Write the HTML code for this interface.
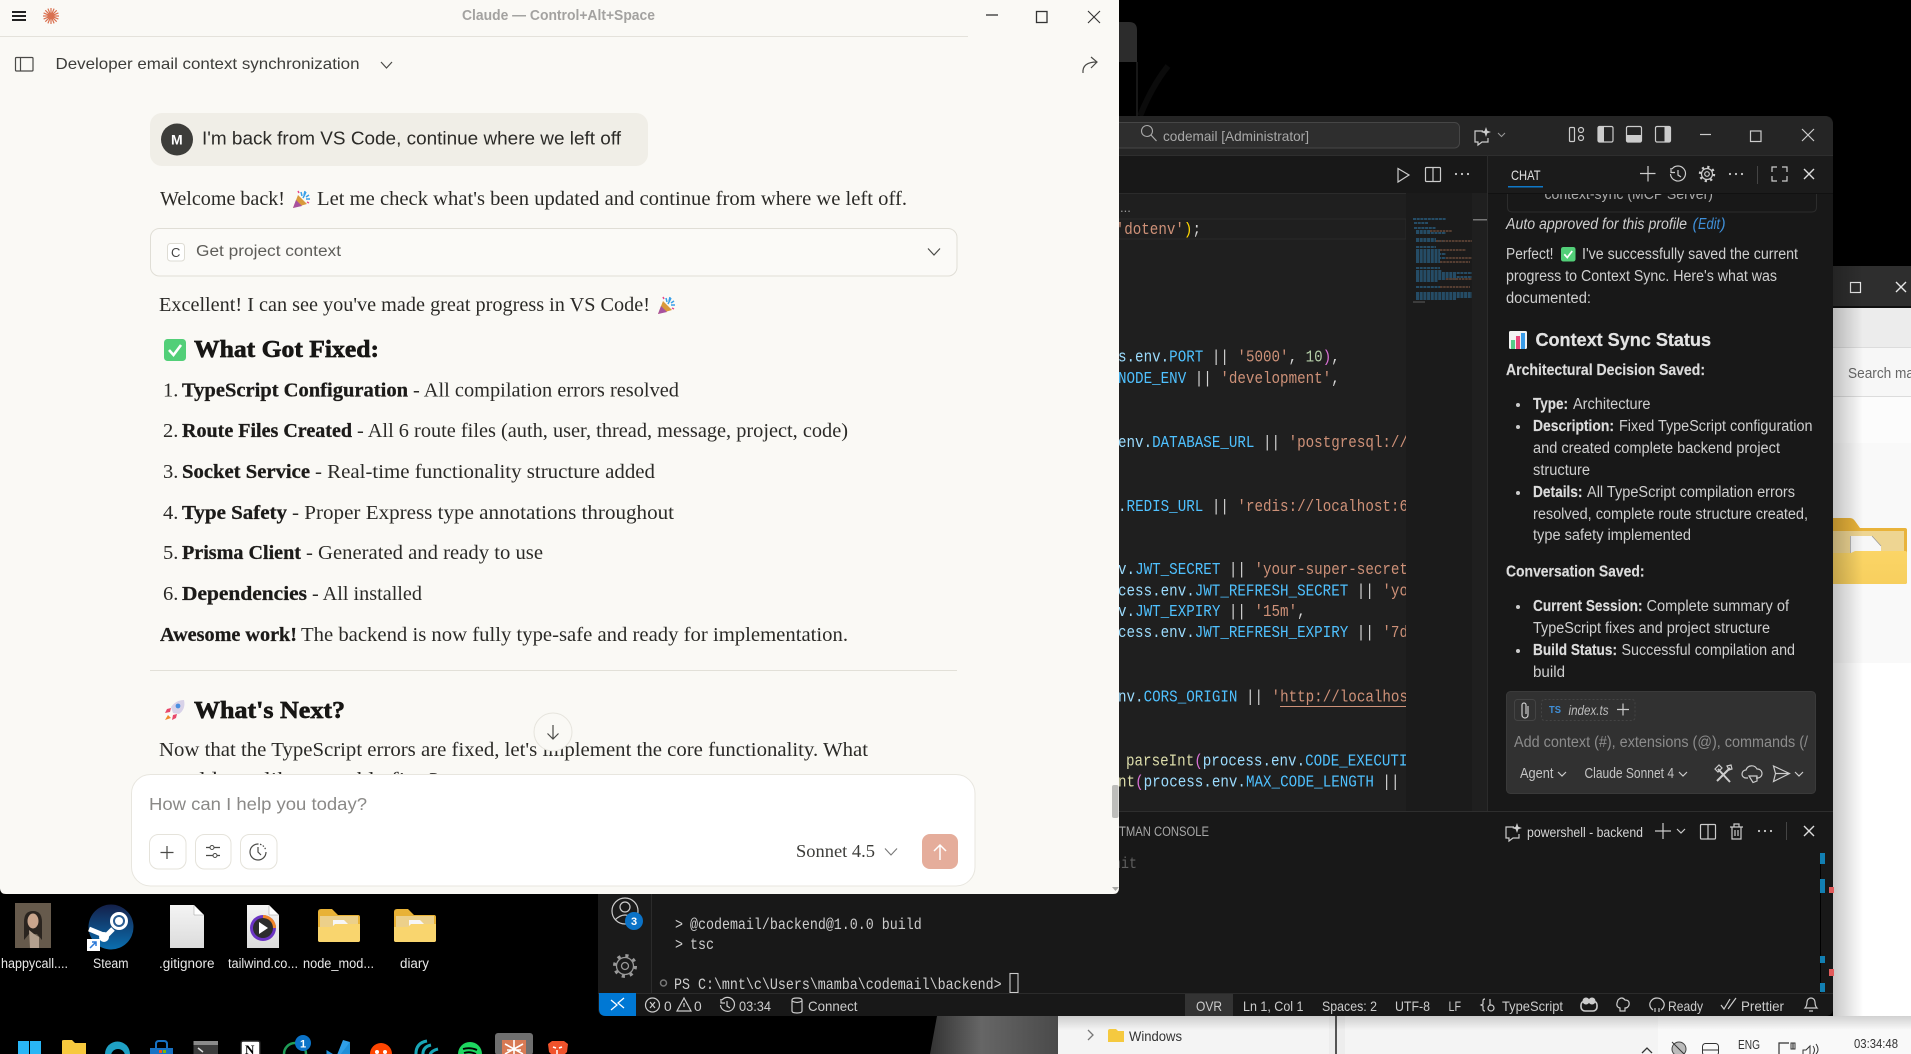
<!DOCTYPE html>
<html><head><meta charset="utf-8"><title>Claude</title>
<style>
html,body{margin:0;padding:0;background:#000;width:1911px;height:1054px;overflow:hidden}
svg{display:block;position:absolute;left:0;top:0}
text{white-space:pre;font-family:"Liberation Sans",sans-serif}
.se{font-family:"Liberation Serif",serif;font-size:20.5px;fill:#2b2a27}
.sb{font-family:"Liberation Serif",serif;font-size:20.5px;font-weight:bold;fill:#1c1b19;stroke:#1c1b19;stroke-width:.3}
.h{font-family:"Liberation Serif",serif;font-size:24.5px;font-weight:bold;fill:#171614;stroke:#171614;stroke-width:.65}
.ch{font-size:15.3px;fill:#cfcfcf}
.cb{font-size:15.3px;font-weight:bold;fill:#dcdcdc;stroke:#dcdcdc;stroke-width:.15}
.m{font-family:"Liberation Mono",monospace;font-size:16.5px;fill:#d4d4d4}
.tm{font-family:"Liberation Mono",monospace;font-size:15.5px;fill:#cccccc}
.st{font-size:13.8px;fill:#cccccc}
.dk{font-size:13.5px;fill:#e8e8e8;text-anchor:start}
.v{fill:#9cdcfe}.c{fill:#4fc1ff}.s{fill:#ce9178}.n{fill:#b5cea8}.f{fill:#dcdcaa}.p{fill:#da70d6}.y{fill:#ffd700}
.i{fill:none;stroke:#cccccc;stroke-width:1.2}
.l{fill:none;stroke:#4a4a47;stroke-width:1.2}
</style></head>
<body>
<svg width="1911" height="1054" viewBox="0 0 1911 1054" xmlns="http://www.w3.org/2000/svg">
<defs>
<linearGradient id="shR" x1="0" x2="1" y1="0" y2="0"><stop offset="0" stop-color="#000" stop-opacity=".22"/><stop offset="1" stop-color="#000" stop-opacity="0"/></linearGradient>
<linearGradient id="shB" x1="0" x2="0" y1="0" y2="1"><stop offset="0" stop-color="#000" stop-opacity=".16"/><stop offset="1" stop-color="#000" stop-opacity="0"/></linearGradient>
<linearGradient id="steam" x1="0" x2="0" y1="0" y2="1"><stop offset="0" stop-color="#14204a"/><stop offset="1" stop-color="#0b6fb0"/></linearGradient>
<linearGradient id="page" x1="0" x2="0" y1="0" y2="1"><stop offset="0" stop-color="#f4f4f4"/><stop offset="1" stop-color="#dcdcdc"/></linearGradient>
<linearGradient id="wall" x1="0" x2="1" y1="0" y2="0"><stop offset="0" stop-color="#333"/><stop offset=".4" stop-color="#666"/><stop offset="1" stop-color="#4a4a4a"/></linearGradient>
<linearGradient id="fold" x1="0" x2="0" y1="0" y2="1"><stop offset="0" stop-color="#fbd566"/><stop offset="1" stop-color="#f7cf5e"/></linearGradient>
<clipPath id="code"><rect x="1119" y="193" width="287" height="620"/></clipPath>
<clipPath id="chat"><rect x="1488" y="194" width="345" height="40"/></clipPath>
<g id="folder">
<path d="M0 3q0-3 3-3h11l6 6h20q2 0 2 2v23q0 2-2 2H2q-2 0-2-2z" fill="#e8b236"/>
<rect x="2" y="7" width="38" height="14" fill="#ecd08a"/>
<path d="M15 11h11l5 5v8H15z" fill="#f6f6f6"/>
<path d="M0 18h14l3-3h25v16q0 2-2 2H2q-2 0-2-2z" fill="#f9d56e"/>
</g>
<g id="copi">
<path d="M9 3H1v11h3v3l4-3h6v-4" fill="none" stroke="#cccccc" stroke-width="1.2"/>
<path d="M12-1l1.3 3.7L17 4l-3.700 1.300L12 9l-1.300-3.700L7 4l3.700-1.300z" fill="#cccccc"/>
</g>
<g id="check">
<rect width="22" height="22" rx="3.500" fill="#52cf78"/>
<path d="M5 11l4.500 5L17 6" fill="none" stroke="#fff" stroke-width="2.600"/>
</g>
<g id="party">
<path d="M1 18L6 5l9 9z" fill="#d99a3c"/>
<path d="M1 18L4 10l6 6z" fill="#a8519e"/>
<path d="M9 2l1 4M13 1l-1 4M17 5l-3 2M18 9l-4 0M11 8l3-6" stroke="#3aa0e8" stroke-width="1.500" fill="none"/>
<path d="M6 1l1 2M15 12l2 1" stroke="#e8488a" stroke-width="1.500" fill="none"/>
</g>
</defs>

<!-- desktop -->
<rect width="1911" height="1054" fill="#000"/>
<path d="M1119 22h10q8 0 8 8v32h-18z" fill="#2c2c2c"/>
<path d="M1137 62v54" stroke="#2e2e2e" stroke-width="1"/>
<path d="M1140 116q12-30 28-50" stroke="#0b0b0b" stroke-width="6" fill="none"/>

<!-- explorer behind -->
<rect x="1833" y="266" width="78" height="788" fill="#fcfcfc"/>
<rect x="1833" y="266" width="78" height="41" fill="#2e2e2e"/>
<rect x="1833" y="306" width="78" height="2" fill="#111"/>
<rect x="1833" y="308" width="78" height="39" fill="#ececec"/>
<rect x="1833" y="347" width="78" height="49" fill="#f7f7f7"/>
<path d="M1833 347.500h78M1833 396.500h78M1833 443.500h78" stroke="#dcdcdc"/>
<rect x="1850.500" y="282.500" width="10" height="10" fill="none" stroke="#e8e8e8" stroke-width="1.200"/>
<path d="M1896 282l10 10M1906 282l-10 10" stroke="#e8e8e8" stroke-width="1.400"/>
<text x="1848" y="378" font-size="15" fill="#666" textLength="66" lengthAdjust="spacingAndGlyphs">Search ma</text>
<rect x="1833" y="443" width="78" height="220" fill="#f9f9f9"/>
<rect x="1833" y="663" width="78" height="391" fill="#fff"/>
<path d="M1820 518h30q3 0 5 3l5 7h45q2 0 2 2v52q0 2-2 2h-85z" fill="#e9b33a"/>
<rect x="1833" y="531" width="71" height="24" fill="#eed592"/>
<path d="M1850 536h22l9 10v9h-31z" fill="#f7f7f7"/><path d="M1850.500 536v19M1872 536l9 10" stroke="#999" stroke-width=".7" fill="none"/>
<path d="M1833 553h18l4-2h50q2 0 2 2v29q0 2-2 2h-72z" fill="url(#fold)"/>
<rect x="1833" y="266" width="30" height="788" fill="url(#shR)"/>

<!-- bottom explorer strip -->
<path d="M930 1054L937 1016H1058V1054z" fill="url(#wall)"/>
<rect x="1058" y="1016" width="853" height="38" fill="#f4f4f4"/>
<rect x="1658" y="1016" width="253" height="38" fill="#f9f9f9"/>
<rect x="1329" y="1016" width="16" height="38" fill="#ededed"/>
<rect x="1335" y="1016" width="2" height="38" fill="#555"/>
<rect x="1058" y="1016" width="853" height="14" fill="url(#shB)"/>
<path d="M1088 1030l5 5-5 5" fill="none" stroke="#777" stroke-width="1.300"/>
<path d="M1108 1031q0-2 2-2h6l2 2h6v11h-16z" fill="#f5c93f"/>
<text x="1129" y="1041" font-size="14" fill="#333" textLength="53" lengthAdjust="spacingAndGlyphs">Windows</text>
<path d="M1642 1053l5-5 5 5" fill="none" stroke="#333" stroke-width="1.300"/>
<circle cx="1679" cy="1049" r="7" fill="#bbb" stroke="#444"/><path d="M1672 1042l14 14" stroke="#333"/>
<rect x="1702.500" y="1043.500" width="16" height="12" rx="3" fill="none" stroke="#333"/><path d="M1702 1050h17" stroke="#333"/>
<text x="1738" y="1049" font-size="13" fill="#333" textLength="22" lengthAdjust="spacingAndGlyphs">ENG</text>
<path d="M1779 1054v-11h10M1793 1043v6" fill="none" stroke="#333" stroke-width="1.200"/><rect x="1791" y="1043" width="4" height="6" fill="none" stroke="#333"/>
<path d="M1803 1054v-4h3l4-4v8M1813 1046q3 4 0 8M1816 1044q4 6 0 10" fill="none" stroke="#333"/>
<text x="1854" y="1048" font-size="13" fill="#333" textLength="44" lengthAdjust="spacingAndGlyphs">03:34:48</text>

<!-- VS Code window -->
<path d="M598 124q0-8 8-8h1219q8 0 8 8v884q0 8-8 8H606q-8 0-8-8z" fill="#181818"/>
<rect x="598" y="116" width="1235" height="39" rx="8" fill="#252525"/>
<rect x="598" y="130" width="1235" height="25" fill="#252525"/>
<path d="M598 155.500h1235" stroke="#2e2e2e"/>
<rect x="1000" y="122.500" width="459.500" height="25.500" rx="5" fill="#2e2e2e" stroke="#464646"/>
<circle cx="1147" cy="131" r="5.500" fill="none" stroke="#aaa" stroke-width="1.100"/><path d="M1151 135l5.500 6" stroke="#aaa" stroke-width="1.200"/>
<text x="1163" y="141" font-size="14" fill="#a8a8a8" textLength="146" lengthAdjust="spacingAndGlyphs">codemail [Administrator]</text>
<use href="#copi" x="1474" y="128"/>
<path d="M1498 133l3.500 3.500 3.500-3.500" fill="none" stroke="#999"/>
<rect x="1569.500" y="127.500" width="5" height="14" rx="1" class="i"/><circle cx="1581" cy="130" r="2.500" class="i"/><circle cx="1581" cy="138" r="2.500" class="i"/>
<rect x="1598" y="126.500" width="15" height="15.500" rx="1.500" class="i"/><rect x="1598" y="126.500" width="6" height="15.500" fill="#cccccc"/>
<rect x="1626.500" y="126.500" width="15" height="15.500" rx="1.500" class="i"/><rect x="1626.500" y="135" width="15" height="7" fill="#cccccc"/>
<rect x="1655.500" y="126.500" width="15" height="15.500" rx="1.500" class="i"/><rect x="1664.500" y="126.500" width="6" height="15.500" fill="#cccccc"/>
<path d="M1700 134.500h11" class="i"/><rect x="1750.500" y="131" width="10.500" height="10.500" class="i"/><path d="M1802 129l12 12M1814 129l-12 12" class="i" stroke="#aaa"/>

<!-- editor -->
<rect x="1119" y="193" width="368" height="619" fill="#1f1f1f"/>
<path d="M1119 193.500h368" stroke="#2b2b2b"/>
<path d="M1398 168.500l11 6.500-11 7z" class="i"/>
<rect x="1425.500" y="167.500" width="15" height="14" rx="1" class="i"/><path d="M1433 167.500v14" class="i"/>
<circle cx="1456" cy="174" r="1.100" fill="#ccc"/><circle cx="1462" cy="174" r="1.100" fill="#ccc"/><circle cx="1468" cy="174" r="1.100" fill="#ccc"/>
<text x="1120" y="212" font-size="13" fill="#9a9a9a">...</text>
<rect x="1119" y="219" width="287" height="20" fill="none" stroke="#2a2a2a"/>
<g clip-path="url(#code)">
<text class="m" transform="translate(1115.700,234) scale(.862,1)"><tspan class="s">'dotenv'</tspan><tspan class="y">)</tspan>;</text>
<text class="m" transform="translate(1118,361.700) scale(.862,1)"><tspan class="v">s.env.</tspan><tspan class="c">PORT</tspan> || <tspan class="s">'5000'</tspan>, <tspan class="n">10</tspan><tspan class="p">)</tspan>,</text>
<text class="m" transform="translate(1118,383) scale(.862,1)"><tspan class="c">NODE_ENV</tspan> || <tspan class="s">'development'</tspan>,</text>
<text class="m" transform="translate(1118,447) scale(.862,1)"><tspan class="v">env.</tspan><tspan class="c">DATABASE_URL</tspan> || <tspan class="s">'postgresql://localhost'</tspan></text>
<text class="m" transform="translate(1118,511) scale(.862,1)"><tspan class="v">.</tspan><tspan class="c">REDIS_URL</tspan> || <tspan class="s">'redis://localhost:6379'</tspan></text>
<text class="m" transform="translate(1118,574) scale(.862,1)"><tspan class="v">v.</tspan><tspan class="c">JWT_SECRET</tspan> || <tspan class="s">'your-super-secret-key'</tspan></text>
<text class="m" transform="translate(1118,595.700) scale(.862,1)"><tspan class="v">cess.env.</tspan><tspan class="c">JWT_REFRESH_SECRET</tspan> || <tspan class="s">'your-refresh'</tspan></text>
<text class="m" transform="translate(1118,616) scale(.862,1)"><tspan class="v">v.</tspan><tspan class="c">JWT_EXPIRY</tspan> || <tspan class="s">'15m'</tspan>,</text>
<text class="m" transform="translate(1118,637) scale(.862,1)"><tspan class="v">cess.env.</tspan><tspan class="c">JWT_REFRESH_EXPIRY</tspan> || <tspan class="s">'7d'</tspan>,</text>
<text class="m" transform="translate(1118,701.700) scale(.862,1)"><tspan class="v">nv.</tspan><tspan class="c">CORS_ORIGIN</tspan> || <tspan class="s">'http://localhost:3000'</tspan></text>
<path d="M1280 706.500h130" stroke="#ce9178"/>
<text class="m" transform="translate(1126,765.700) scale(.862,1)"><tspan class="f">parseInt</tspan><tspan class="p">(</tspan><tspan class="v">process.env.</tspan><tspan class="c">CODE_EXECUTION</tspan></text>
<text class="m" transform="translate(1118,786.700) scale(.862,1)"><tspan class="f">nt</tspan><tspan class="p">(</tspan><tspan class="v">process.env.</tspan><tspan class="c">MAX_CODE_LENGTH</tspan> ||</text>
</g>
<!-- minimap -->
<rect x="1406" y="193" width="66" height="619" fill="#1b1b1b"/>
<rect x="1472" y="193" width="15" height="619" fill="#1f1f1f"/>
<rect x="1473" y="219" width="14" height="1.500" fill="#777"/>
<path d="M1487.500 155v657" stroke="#2b2b2b"/>
<path d="M1413 219h33M1414 223h14M1414 228h22M1416 231h14M1416 233h30M1416 239h20M1416 241h30M1416 247h20M1416 250h24M1416 252h24M1416 254h30M1416 256h24M1416 258h30M1416 260h24M1416 262h26M1416 268h24M1416 271h26M1416 273h56M1416 275h40M1416 277h56M1416 279h40M1416 281h22M1416 287h26M1416 293h56M1416 295h56M1416 297h56M1416 299h40" stroke="#2f7eb0" stroke-width=".9" fill="none" stroke-dasharray="3 .7"/>
<path d="M1430 231h22M1436 241h36M1440 250h26M1446 258h26M1440 262h30M1446 279h26M1440 287h30" stroke="#8f6148" stroke-width=".9" fill="none" stroke-dasharray="2.500 .7"/>
<path d="M1413 302h12" stroke="#666" stroke-width=".9"/>

<!-- chat panel -->
<rect x="1488" y="156" width="345" height="656" fill="#181818"/>
<g clip-path="url(#chat)">
<text x="1544.500" y="199" font-size="14.500" fill="#aaa" textLength="168.500" lengthAdjust="spacingAndGlyphs">context-sync (MCP Server)</text>
</g>
<path d="M1507.500 193v14q0 5 5 5h299q5 0 5-5v-14" fill="none" stroke="#2c2c2c"/>
<rect x="1488" y="156" width="345" height="37" fill="#1b1b1b"/>
<path d="M1488 193.500h345" stroke="#111"/>
<text x="1511" y="180" font-size="14" fill="#e0e0e0" textLength="29.500" lengthAdjust="spacingAndGlyphs">CHAT</text>
<rect x="1508" y="186" width="35" height="1.500" fill="#0f78c8"/>
<path d="M1640 173.500h15.500M1648 166v15.500" class="i" stroke-width="1.400"/>
<path d="M1672 169a7.500 7.500 0 1 1-1.500 5M1671 168v4.500h4M1678 170v5l3 2" class="i"/>
<circle cx="1707" cy="174" r="2.300" class="i"/><circle cx="1707" cy="174" r="5.500" class="i"/><circle cx="1707" cy="174" r="7" fill="none" stroke="#ccc" stroke-width="2.400" stroke-dasharray="2.200 3.300"/>
<circle cx="1730" cy="174" r="1.100" fill="#ccc"/><circle cx="1736" cy="174" r="1.100" fill="#ccc"/><circle cx="1742" cy="174" r="1.100" fill="#ccc"/>
<path d="M1757.500 166v18" stroke="#444"/>
<path d="M1772 172v-5h5M1782 167h5v5M1787 176v5h-5M1777 181h-5v-5" class="i" stroke-width="1.400"/>
<path d="M1804 169l10 10M1814 169l-10 10" stroke="#ddd" stroke-width="1.400"/>

<text x="1506" y="229" class="ch" font-style="italic" textLength="181" lengthAdjust="spacingAndGlyphs">Auto approved for this profile</text>
<text x="1692.500" y="229" class="ch" font-style="italic" style="fill:#3f8fd8">(</text>
<text x="1698" y="229" class="ch" font-style="italic" style="fill:#3f8fd8" textLength="22" lengthAdjust="spacingAndGlyphs">Edit</text>
<text x="1720.500" y="229" class="ch" font-style="italic" style="fill:#3f8fd8">)</text>
<text x="1506" y="259" class="ch" textLength="47.500" lengthAdjust="spacingAndGlyphs">Perfect!</text>
<g transform="translate(1561,247) scale(.66)"><use href="#check"/></g>
<text x="1582" y="259" class="ch" textLength="216" lengthAdjust="spacingAndGlyphs">I've successfully saved the current</text>
<text x="1506" y="281" class="ch" textLength="271" lengthAdjust="spacingAndGlyphs">progress to Context Sync. Here's what was</text>
<text x="1506" y="303" class="ch" textLength="85" lengthAdjust="spacingAndGlyphs">documented:</text>
<rect x="1509" y="331" width="18" height="18" rx="1.500" fill="#f2f2f2"/><rect x="1511" y="340" width="4" height="9" fill="#55cc88"/><rect x="1516" y="336" width="4" height="13" fill="#e8487a"/><rect x="1521" y="333" width="4" height="16" fill="#3a9ce8"/>
<text x="1535.500" y="346" font-size="18" font-weight="bold" fill="#e2e2e2" stroke="#e2e2e2" stroke-width=".25" textLength="175.500" lengthAdjust="spacingAndGlyphs">Context Sync Status</text>
<text x="1506" y="375" class="cb" textLength="199" lengthAdjust="spacingAndGlyphs">Architectural Decision Saved:</text>
<g fill="#ccc"><circle cx="1518" cy="405" r="2"/><circle cx="1518" cy="427" r="2"/><circle cx="1518" cy="493" r="2"/><circle cx="1518" cy="607" r="2"/><circle cx="1518" cy="651" r="2"/></g>
<text x="1533" y="409" class="cb" textLength="35" lengthAdjust="spacingAndGlyphs">Type:</text>
<text x="1573" y="409" class="ch" textLength="77.500" lengthAdjust="spacingAndGlyphs">Architecture</text>
<text x="1533" y="431" class="cb" textLength="81" lengthAdjust="spacingAndGlyphs">Description:</text>
<text x="1619" y="431" class="ch" textLength="193.500" lengthAdjust="spacingAndGlyphs">Fixed TypeScript configuration</text>
<text x="1533" y="453" class="ch" textLength="247" lengthAdjust="spacingAndGlyphs">and created complete backend project</text>
<text x="1533" y="475" class="ch" textLength="57" lengthAdjust="spacingAndGlyphs">structure</text>
<text x="1533" y="497" class="cb" textLength="49.500" lengthAdjust="spacingAndGlyphs">Details:</text>
<text x="1587" y="497" class="ch" textLength="208" lengthAdjust="spacingAndGlyphs">All TypeScript compilation errors</text>
<text x="1533" y="519" class="ch" textLength="275" lengthAdjust="spacingAndGlyphs">resolved, complete route structure created,</text>
<text x="1533" y="540" class="ch" textLength="158" lengthAdjust="spacingAndGlyphs">type safety implemented</text>
<text x="1506" y="576.500" class="cb" textLength="138.500" lengthAdjust="spacingAndGlyphs">Conversation Saved:</text>
<text x="1533" y="611" class="cb" textLength="109.500" lengthAdjust="spacingAndGlyphs">Current Session:</text>
<text x="1646.500" y="611" class="ch" textLength="142.500" lengthAdjust="spacingAndGlyphs">Complete summary of</text>
<text x="1533" y="633" class="ch" textLength="237" lengthAdjust="spacingAndGlyphs">TypeScript fixes and project structure</text>
<text x="1533" y="655" class="cb" textLength="84" lengthAdjust="spacingAndGlyphs">Build Status:</text>
<text x="1621.500" y="655" class="ch" textLength="173.500" lengthAdjust="spacingAndGlyphs">Successful compilation and</text>
<text x="1533" y="677" class="ch" textLength="32" lengthAdjust="spacingAndGlyphs">build</text>

<!-- chat input -->
<rect x="1506.500" y="691.500" width="309" height="102" rx="4" fill="#313131" stroke="#3a3a3a"/>
<rect x="1514.500" y="699.500" width="21" height="21" rx="3" fill="none" stroke="#444"/>
<path d="M1528 706v9a3 3 0 0 1-6 0v-10a2 2 0 0 1 4 0v9" class="i"/>
<rect x="1541.500" y="699.500" width="93.500" height="21" rx="3" fill="none" stroke="#444" stroke-dasharray="2 2"/>
<text x="1549" y="713" font-size="10" font-weight="bold" fill="#3f8fd8" textLength="12" lengthAdjust="spacingAndGlyphs">TS</text>
<text x="1568.500" y="715" font-size="14" font-style="italic" fill="#bbb" textLength="40" lengthAdjust="spacingAndGlyphs">index.ts</text>
<path d="M1617 709.500h12M1623 703.500v12" class="i"/>
<text x="1514" y="747" font-size="15.300" fill="#8c8c8c" textLength="294" lengthAdjust="spacingAndGlyphs">Add context (#), extensions (@), commands (/</text>
<text x="1520" y="778" font-size="14.500" fill="#c4c4c4" textLength="33.500" lengthAdjust="spacingAndGlyphs">Agent</text>
<path d="M1558 772l4 4 4-4M1679 772l4 4 4-4M1795 772l4 4 4-4" class="i" stroke-width="1"/>
<text x="1584.500" y="778" font-size="14.500" fill="#c4c4c4" textLength="89.500" lengthAdjust="spacingAndGlyphs">Claude Sonnet 4</text>
<path d="M1718 769l12 13M1730 768l-13 13" stroke="#ccc" stroke-width="2" fill="none"/><path d="M1715 769l4-4 3 3-4 4zM1727 766l4-1 1 4-3 1z" class="i"/>
<path d="M1748 778h-2a4 4 0 0 1 0-8 6 6 0 0 1 11-1 4 4 0 0 1 1 9h-2M1749 776h8v5l-4 1.500z" class="i"/>
<path d="M1773.500 766l16 7.500-16 8 2-8zM1775.500 773.500h14" class="i"/>

<!-- bottom panel -->
<rect x="651" y="812" width="1182" height="181" fill="#181818"/>
<path d="M1119 811.500h714" stroke="#2e2e2e"/>
<text x="1119" y="836" font-size="13.500" fill="#a8a8a8" textLength="90" lengthAdjust="spacingAndGlyphs">TMAN CONSOLE</text>
<text class="tm" transform="translate(1113,868) scale(.86,1)" style="fill:#5f5f5f">nit</text>
<use href="#copi" x="1505" y="824"/>
<text x="1527" y="837" font-size="14" fill="#d4d4d4" textLength="116" lengthAdjust="spacingAndGlyphs">powershell - backend</text>
<path d="M1655 831h16M1663 823v16" class="i"/>
<path d="M1677 829l4 4 4-4" class="i" stroke-width="1"/>
<rect x="1700.500" y="824.500" width="15" height="14.500" rx="1" class="i"/><path d="M1708 824.500v14.500" class="i"/>
<path d="M1730 827h13M1734 827v-3h5v3M1732 827v12h9v-12M1735 830v6M1738 830v6" class="i"/>
<circle cx="1759" cy="831" r="1.100" fill="#ccc"/><circle cx="1765" cy="831" r="1.100" fill="#ccc"/><circle cx="1771" cy="831" r="1.100" fill="#ccc"/>
<path d="M1786.500 822v18" stroke="#444"/>
<path d="M1804 826l10 10M1814 826l-10 10" stroke="#ddd" stroke-width="1.400"/>
<path d="M1820.500 853v140" stroke="#000"/>
<g fill="#127fb2"><rect x="1820" y="853" width="5" height="11"/><rect x="1820" y="879" width="5" height="14"/><rect x="1820" y="956" width="5" height="7"/><rect x="1820" y="983" width="5" height="9"/></g>
<g fill="#e25c5c"><rect x="1829" y="887" width="5" height="6"/><rect x="1829" y="969" width="5" height="7"/></g>

<!-- activity bar -->
<rect x="598" y="894" width="53" height="99" fill="#1a1a1a"/>
<path d="M651.500 894v99" stroke="#2b2b2b"/>
<circle cx="625" cy="911" r="13" class="i" stroke="#999"/>
<circle cx="625" cy="907" r="5" class="i" stroke="#999"/>
<path d="M615 920q10-10 20 0" class="i" stroke="#999"/>
<circle cx="634" cy="921" r="9" fill="#0b73c8"/>
<text x="631" y="925" font-size="11" font-weight="bold" fill="#fff">3</text>
<circle cx="625" cy="966" r="3.500" fill="none" stroke="#999" stroke-width="1.300"/><circle cx="625" cy="966" r="8.500" fill="none" stroke="#999" stroke-width="1.300"/><circle cx="625" cy="966" r="10.500" fill="none" stroke="#999" stroke-width="3" stroke-dasharray="3.200 5.050"/>

<!-- terminal -->
<text class="tm" transform="translate(675,929) scale(.86,1)">&gt;</text>
<text class="tm" transform="translate(690,929) scale(.86,1)">@codemail/backend@1.0.0 build</text>
<text class="tm" transform="translate(675,949) scale(.86,1)">&gt;</text>
<text class="tm" transform="translate(690,949) scale(.86,1)">tsc</text>
<circle cx="663.500" cy="983" r="3" fill="none" stroke="#777" stroke-width="1.500"/>
<text class="tm" transform="translate(674,989) scale(.86,1)">PS C:\mnt\c\Users\mamba\codemail\backend&gt;</text>
<rect x="1010" y="973.500" width="8" height="19" fill="none" stroke="#ccc" stroke-width="1.100"/>

<!-- status bar -->
<path d="M598 993h1235v15q0 8-8 8H606q-8 0-8-8z" fill="#181818"/>
<path d="M598 993.500h1235" stroke="#2b2b2b"/>
<path d="M599 993h37v23h-30q-7 0-7-7z" fill="#0078d4"/>
<path d="M611 1000l6 5-6 5M624 998l-6 5 6 5" fill="none" stroke="#fff" stroke-width="1.300"/>
<circle cx="652.500" cy="1005" r="7" class="i"/><path d="M650 1002l5 6M655 1002l-5 6" class="i"/>
<text x="664" y="1011" class="st">0</text>
<path d="M684 998l7 13h-14zM684 1003v4" class="i"/>
<text x="694" y="1011" class="st">0</text>
<path d="M722 1000a7 7 0 1 1-1.500 5M721 999v4h4M727 1001v5l3 2" class="i"/>
<text x="739" y="1011" class="st" textLength="32" lengthAdjust="spacingAndGlyphs">03:34</text>
<path d="M792 1000q0-2 5-2t5 2v11q0 2-5 2t-5-2zM792 1001q5 3 10 0" class="i"/>
<text x="808" y="1011" class="st" textLength="49.500" lengthAdjust="spacingAndGlyphs">Connect</text>
<rect x="1185" y="994" width="48" height="22" fill="#333"/>
<text x="1196" y="1011" class="st" textLength="26" lengthAdjust="spacingAndGlyphs">OVR</text>
<text x="1243" y="1011" class="st" textLength="60.500" lengthAdjust="spacingAndGlyphs">Ln 1, Col 1</text>
<text x="1322" y="1011" class="st" textLength="55" lengthAdjust="spacingAndGlyphs">Spaces: 2</text>
<text x="1395" y="1011" class="st" textLength="35" lengthAdjust="spacingAndGlyphs">UTF-8</text>
<text x="1448.500" y="1011" class="st" textLength="12.500" lengthAdjust="spacingAndGlyphs">LF</text>
<path d="M1485 999q-2 0-2 2v3l-2 1 2 1v3q0 2 2 2" class="i"/><circle cx="1491" cy="1008" r="3" class="i"/><path d="M1490 999v6" class="i"/>
<text x="1502" y="1011" class="st" textLength="61" lengthAdjust="spacingAndGlyphs">TypeScript</text>
<rect x="1581" y="1001" width="16" height="10" rx="4" fill="none" stroke="#ccc" stroke-width="1.600"/><circle cx="1586" cy="1001" r="3.500" fill="#ccc"/><circle cx="1592" cy="1001" r="3.500" fill="#ccc"/>
<path d="M1618 1000q4-4 7 0 5 0 4 5-1 3-4 3v3h-5v-3q-4-1-3-5z" class="i"/>
<path d="M1653 1010q-4-3-3-7 2-5 7-5t7 5q1 4-3 7M1655 1012v-4M1659 1012v-4" class="i"/>
<text x="1668" y="1011" class="st" textLength="35" lengthAdjust="spacingAndGlyphs">Ready</text>
<path d="M1721 1005l3 4 6-10M1728 1009l8-11" class="i"/>
<text x="1741" y="1011" class="st" textLength="43" lengthAdjust="spacingAndGlyphs">Prettier</text>
<path d="M1805 1008q2-2 2-6a4 4 0 0 1 8 0q0 4 2 6zM1809 1011h4" class="i"/>

<!-- desktop icons -->
<rect x="15" y="903" width="36" height="45" fill="#665a4c"/>
<path d="M24 940v-18q0-11 9-11t9 11v18l-5-6h-8z" fill="#2a241f"/>
<ellipse cx="33" cy="921" rx="5.500" ry="7.500" fill="#c9a58c"/>
<path d="M30 948l-1-18 5 4 5 3v11z" fill="#b3a08e"/>
<circle cx="111" cy="927" r="22.500" fill="url(#steam)"/>
<circle cx="119" cy="921" r="9" fill="#fff"/><circle cx="119" cy="921" r="6" fill="#2a5d92"/><circle cx="119" cy="921" r="4" fill="#fff"/>
<path d="M89 929l17 7 7-7" stroke="#fff" stroke-width="5" fill="none"/>
<circle cx="104" cy="937" r="5" fill="#fff"/>
<rect x="87" y="939" width="13" height="12" fill="#fff"/><path d="M90 948l6-6M92 942h4v4" stroke="#2b79d8" stroke-width="1.500" fill="none"/>
<path d="M170 905h24l10 10v33h-34z" fill="url(#page)"/><path d="M194 905v10h10z" fill="#fff" stroke="#999" stroke-width=".5"/>
<path d="M247 905h22l10 10v33h-32z" fill="url(#page)"/><path d="M269 905v10h10z" fill="#fff" stroke="#999" stroke-width=".5"/>
<circle cx="263" cy="928" r="13" fill="#6b34c4"/><path d="M263 915a13 13 0 0 1 13 13h-13z" fill="#f0862a"/><circle cx="263" cy="928" r="10" fill="#2d2d2d"/><path d="M259 922l9 6-9 6z" fill="#fff"/>
<use href="#folder" x="318" y="909"/>
<use href="#folder" x="394" y="909"/>
<text x="1" y="968" class="dk" textLength="67" lengthAdjust="spacingAndGlyphs">happycall....</text>
<text x="93" y="968" class="dk" textLength="35.500" lengthAdjust="spacingAndGlyphs">Steam</text>
<text x="159" y="968" class="dk" textLength="55.500" lengthAdjust="spacingAndGlyphs">.gitignore</text>
<text x="228" y="968" class="dk" textLength="70" lengthAdjust="spacingAndGlyphs">tailwind.co...</text>
<text x="303" y="968" class="dk" textLength="71" lengthAdjust="spacingAndGlyphs">node_mod...</text>
<text x="400" y="968" class="dk" textLength="29" lengthAdjust="spacingAndGlyphs">diary</text>

<!-- taskbar -->
<g fill="#29b6f6"><rect x="18" y="1041" width="11" height="14"/><rect x="30" y="1041" width="11" height="14"/></g>
<path d="M62 1041q0-1 2-1h8l3 3h11v12H62z" fill="#f7c93e"/>
<circle cx="117.500" cy="1054" r="12.500" fill="#1fa1c4"/><circle cx="118" cy="1056" r="7" fill="#000"/>
<path d="M150 1048h23v7h-23z" fill="#1772c4"/><path d="M156 1048v-4q0-3 3-3h5q3 0 3 3v4" fill="none" stroke="#1772c4" stroke-width="2"/><rect x="159" y="1050" width="3" height="3" fill="#f25022"/><rect x="163" y="1050" width="3" height="3" fill="#7fba00"/>
<rect x="193.500" y="1041" width="24.500" height="14" fill="#3c3c3c"/><rect x="193.500" y="1041" width="24.500" height="4" fill="#8a8a8a"/><path d="M198 1048l5 4" stroke="#ddd" stroke-width="1.500"/>
<rect x="241" y="1041" width="19" height="15" rx="2" fill="#fff" stroke="#222" stroke-width="1.500"/>
<text x="245" y="1054" font-size="13" font-weight="bold" fill="#000" style="font-family:'Liberation Serif',serif">N</text>
<circle cx="295" cy="1054" r="11" fill="none" stroke="#1f9d57" stroke-width="2.500"/>
<circle cx="303" cy="1043" r="8" fill="#0b73c8"/><text x="300" y="1047.500" font-size="11" font-weight="bold" fill="#fff">1</text>
<path d="M326.500 1050l8 5h-8zM350 1042v13h-11l1-2z" fill="#1e8fd8"/><path d="M343 1040l7 2-10 13h-3z" fill="#2f9fe8"/>
<circle cx="381" cy="1054" r="11" fill="#ff4500"/><circle cx="377" cy="1052" r="2" fill="#fff"/><circle cx="385" cy="1052" r="2" fill="#fff"/>
<path d="M416 1056q-1-13 11-15M423 1056q-1-9 8-11M430 1056q0-5 8-7" fill="none" stroke="#19a7b8" stroke-width="3"/>
<circle cx="470" cy="1054" r="12" fill="#1ed760"/><path d="M463 1049q7-2 14 1M464 1053q6-2 12 1" stroke="#000" stroke-width="1.800" fill="none"/>
<rect x="495" y="1033" width="38" height="22" rx="3" fill="#6f6f6f"/>
<rect x="502" y="1040" width="24" height="15" fill="#d87a54"/>
<path d="M514 1040v15M505 1044l18 10M523 1044l-18 10M507 1050h14" stroke="#fff" stroke-width="1.600"/>
<path d="M548 1044l4-3h12l4 3-1 8-3 3h-12l-3-3z" fill="#f1532c"/><path d="M553 1047l3 1M559 1048l3-1M557 1050v4" stroke="#fff" stroke-width="1.500" fill="none"/>

<!-- Claude window -->
<path d="M0 0H1119V888q0 6-6 6H6q-6 0-6-6z" fill="#faf9f5"/>
<path d="M0 36.500h968" stroke="#e4e2db"/>
<path d="M12 12h14M12 16h14M12 20h14" stroke="#222" stroke-width="1.900"/>
<path d="M51 8v16M43 16h16M45.300 10.300l11.400 11.400M56.700 10.300L45.300 21.700M47.900 8.600l6.200 14.800M54.100 8.600l-6.200 14.800M43.600 12.900l14.800 6.200M58.400 12.900l-14.800 6.200" stroke="#d9704f" stroke-width="1.200"/>
<text x="462" y="20" font-size="14.500" font-weight="bold" fill="#a3a2a0" textLength="193" lengthAdjust="spacingAndGlyphs">Claude — Control+Alt+Space</text>
<path d="M986 15h12" stroke="#333" stroke-width="1.300"/>
<rect x="1036.500" y="11.500" width="10.500" height="11" fill="none" stroke="#333" stroke-width="1.300"/>
<path d="M1088 11l12 12M1100 11l-12 12" stroke="#333" stroke-width="1.100"/>
<rect x="15.500" y="57.500" width="17.500" height="13.500" rx="1" class="l"/><path d="M20.500 57.500v13.500" class="l"/>
<text x="55.500" y="69" font-size="16" fill="#3d3d3a" textLength="304" lengthAdjust="spacingAndGlyphs">Developer email context synchronization</text>
<path d="M381 62l5.500 6 5.500-6" class="l"/>
<path d="M1083 73q-1-11 14-11M1091 57l6 5-6 6" class="l"/>
<rect x="150" y="113" width="498" height="53" rx="12" fill="#f0eee7"/>
<circle cx="177" cy="139.500" r="16" fill="#3d3d3a"/>
<text x="171" y="144.500" font-size="14" font-weight="bold" fill="#fff">M</text>
<text x="202" y="144.500" font-size="18.500" fill="#2b2a27" textLength="419" lengthAdjust="spacingAndGlyphs">I'm back from VS Code, continue where we left off</text>
<text x="160" y="205" class="se" textLength="125" lengthAdjust="spacingAndGlyphs">Welcome back!</text>
<use href="#party" x="292" y="190"/>
<text x="317" y="205" class="se" textLength="590" lengthAdjust="spacingAndGlyphs">Let me check what's been updated and continue from where we left off.</text>
<rect x="150.500" y="228.500" width="806.500" height="47.500" rx="9" fill="#fbfaf7" stroke="#e0ded6"/>
<rect x="167.500" y="243.500" width="17" height="17.500" rx="3" fill="#fff" stroke="#dedcd4"/>
<text x="171" y="257" font-size="13" fill="#444">C</text>
<text x="196" y="256" font-size="15.500" fill="#5e5d59" textLength="145" lengthAdjust="spacingAndGlyphs">Get project context</text>
<path d="M928 248.500l6 6.500 6-6.500" class="l"/>
<text x="159" y="311" class="se" textLength="491" lengthAdjust="spacingAndGlyphs">Excellent! I can see you've made great progress in VS Code!</text>
<use href="#party" x="657" y="296"/>
<use href="#check" x="164" y="339"/>
<text x="194" y="357" class="h" textLength="185" lengthAdjust="spacingAndGlyphs">What Got Fixed:</text>

<text x="163" y="396.500" class="se">1.</text><text x="182" y="396.500" class="sb" textLength="226" lengthAdjust="spacingAndGlyphs">TypeScript Configuration</text><text x="413" y="396.500" class="se" textLength="266" lengthAdjust="spacingAndGlyphs">- All compilation errors resolved</text>
<text x="163" y="437" class="se">2.</text><text x="182" y="437" class="sb" textLength="170" lengthAdjust="spacingAndGlyphs">Route Files Created</text><text x="357" y="437" class="se" textLength="491" lengthAdjust="spacingAndGlyphs">- All 6 route files (auth, user, thread, message, project, code)</text>
<text x="163" y="478" class="se">3.</text><text x="182" y="478" class="sb" textLength="128" lengthAdjust="spacingAndGlyphs">Socket Service</text><text x="315" y="478" class="se" textLength="340" lengthAdjust="spacingAndGlyphs">- Real-time functionality structure added</text>
<text x="163" y="519" class="se">4.</text><text x="182" y="519" class="sb" textLength="105" lengthAdjust="spacingAndGlyphs">Type Safety</text><text x="292" y="519" class="se" textLength="382" lengthAdjust="spacingAndGlyphs">- Proper Express type annotations throughout</text>
<text x="163" y="559" class="se">5.</text><text x="182" y="559" class="sb" textLength="119" lengthAdjust="spacingAndGlyphs">Prisma Client</text><text x="306" y="559" class="se" textLength="237" lengthAdjust="spacingAndGlyphs">- Generated and ready to use</text>
<text x="163" y="600" class="se">6.</text><text x="182" y="600" class="sb" textLength="125" lengthAdjust="spacingAndGlyphs">Dependencies</text><text x="312" y="600" class="se" textLength="110" lengthAdjust="spacingAndGlyphs">- All installed</text>
<text x="160" y="641" class="sb" textLength="137" lengthAdjust="spacingAndGlyphs">Awesome work!</text><text x="301" y="641" class="se" textLength="547" lengthAdjust="spacingAndGlyphs">The backend is now fully type-safe and ready for implementation.</text>
<path d="M150 670.500h807" stroke="#e2e0d8"/>
<g transform="translate(164,699)">
<path d="M20 1q2 9-5 14l-6-1-2-6q5-7 13-7z" fill="#d8d2e8"/><circle cx="14" cy="7" r="2.400" fill="#4a8fe0"/>
<path d="M7 9l-4 1-2 4 5-1zM13 15l-1 4-4 2 1-5z" fill="#e8486a"/><path d="M4 16l3 3-6 2z" fill="#f08a2c"/>
</g>
<text x="194" y="718" class="h" textLength="151" lengthAdjust="spacingAndGlyphs">What's Next?</text>
<text x="159" y="756" class="se" textLength="709" lengthAdjust="spacingAndGlyphs">Now that the TypeScript errors are fixed, let's implement the core functionality. What</text>
<text x="159" y="786" class="se" textLength="280" lengthAdjust="spacingAndGlyphs">would you like to tackle first?</text>
<circle cx="553" cy="732" r="19" fill="#faf9f5" stroke="#e6e4dd"/>
<path d="M553 725v14M547.500 733.500l5.500 5.500 5.500-5.500" class="l"/>
<rect x="131.500" y="774.500" width="843.500" height="111.500" rx="19" fill="#fff" stroke="#e8e6df"/>
<text x="149" y="810" font-size="17.500" fill="#8a8987" textLength="218" lengthAdjust="spacingAndGlyphs">How can I help you today?</text>
<rect x="149.500" y="834.500" width="36.500" height="34.500" rx="9" fill="#fff" stroke="#e5e3db"/>
<path d="M167 846v13M160.500 852.500h13" class="l"/>
<rect x="195.500" y="834.500" width="35.500" height="34.500" rx="9" fill="#fff" stroke="#e5e3db"/>
<path d="M206 847.500h14M206 855.500h14" class="l" stroke-width="1"/><circle cx="212" cy="847.500" r="2" fill="#fff" stroke="#4a4a47"/><circle cx="215" cy="855.500" r="2" fill="#fff" stroke="#4a4a47"/>
<rect x="240.500" y="834.500" width="36.500" height="34.500" rx="9" fill="#fff" stroke="#e5e3db"/>
<circle cx="258" cy="852" r="8" class="l" stroke-dasharray="38 1.500 1.500 1.500 1.500 1.500 1.500 3"/><path d="M258 847v5l3 3" class="l"/>
<text x="796" y="857" class="se" style="fill:#3d3d3a;font-size:18px" textLength="79" lengthAdjust="spacingAndGlyphs">Sonnet 4.5</text>
<path d="M885 848.500l6 6.500 6-6.500" fill="none" stroke="#777" stroke-width="1.100"/>
<rect x="922" y="834" width="36" height="35" rx="8" fill="#e5ad9b"/>
<path d="M940 860v-15M934 851l6-6 6 6" fill="none" stroke="#fff" stroke-width="1.500"/>
<rect x="1112" y="785" width="6.500" height="33" rx="2" fill="#bdbdba"/>
<path d="M1112 887h7l-3.500 4z" fill="#a8a8a5"/>
</svg>
</body></html>
